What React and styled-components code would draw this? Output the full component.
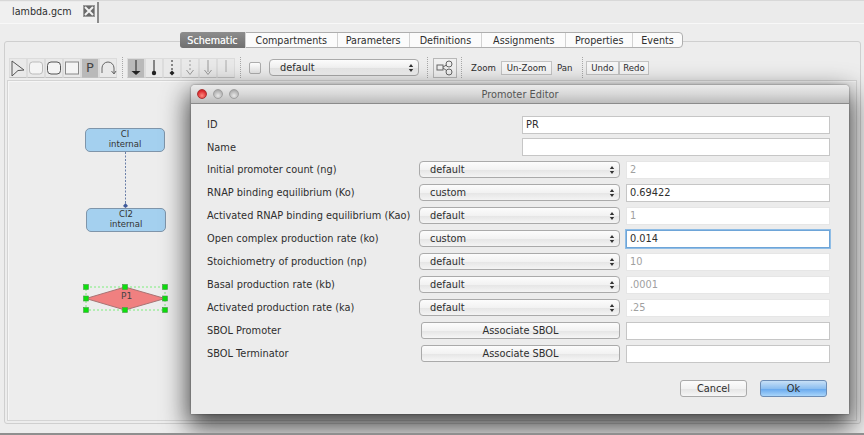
import React from "react";
import styled, { createGlobalStyle, css } from "styled-components";

const Global = createGlobalStyle`
  html, body { margin: 0; padding: 0; background: #ededed; overflow: hidden; }
  * { box-sizing: border-box; }
`;

const font = css`
  font-family: "DejaVu Sans", "Liberation Sans", sans-serif;
  font-size: 9.8px;
  color: #2e2e2e;
`;

const Frame = styled.div`
  ${font}
  position: relative;
  width: 864px;
  height: 435px;
  background: #ededed;
  display: flex;
  flex-direction: column;
  overflow: hidden;
  border-bottom: 2px solid #8f8f8f;
`;

const TabHeader = styled.div`
  height: 24px;
  flex: none;
  display: flex;
  align-items: stretch;
  padding-top: 2px;
  border-bottom: 1px solid #f8f8f8;
  box-shadow: 0 1px 0 #d8d8d8 inset;
  background: #ebebeb;
`;

const FileTab = styled.div`
  width: 99px;
  display: flex;
  align-items: center;
  gap: 11px;
  padding: 0 3px 3px 12px;
  font-size: 9.6px;
  background: #f0f0f0;
  border-right: 2px solid #8c8c8c;
`;

const CloseBox = styled.div`
  width: 12px;
  height: 12px;
  background: #6a6a6a;
  border: 1px solid #9a9a9a;
  display: flex;
`;

const Panel = styled.div`
  position: relative;
  flex: 1;
  margin: 17px 3px 9px 4px;
  border: 1px solid #cfcfcf;
  border-radius: 3px;
  display: flex;
  flex-direction: column;
`;

const TabStrip = styled.div`
  display: flex;
  height: 16px;
  margin: -10px 0 0 175px;
  width: 503px;
  background: #fbfbfb;
  border: 1px solid #aeaeae;
  border-radius: 4px;
`;

const Tab = styled.div`
  width: ${(p) => p.$w}px;
  display: flex;
  align-items: center;
  justify-content: center;
  font-size: 9.6px;
  border-right: ${(p) => (p.$last ? "none" : "1px solid #d2d2d2")};
  ${(p) =>
    p.$active &&
    css`
      color: #f4f4f4;
      text-shadow: 0 0 0.6px #f4f4f4;
      background: linear-gradient(#8d8d8d, #6f6f6f);
      border-radius: 3px 0 0 3px;
      margin: -1px 0 -1px -1px;
    `}
`;

const Toolbar = styled.div`
  display: flex;
  align-items: center;
  height: 21px;
  margin-top: 9px;
  padding-left: 4px;
  flex: none;
`;

const ToolGroup = styled.div`
  display: flex;
`;

const ToolButton = styled.div`
  width: 18px;
  height: 20px;
  border: 1px solid #dcdcdc;
  border-bottom-color: #c0c0c0;
  background: ${(p) => (p.$on ? "#b9b9b9" : "#e9e9e9")};
  display: flex;
  align-items: center;
  justify-content: center;
  font-size: 13px;
  color: #444;
`;

const Dots = styled.div`
  width: 1px;
  height: 21px;
  margin: ${(p) => p.$m || "0 4px 0 5px"};
  border-left: 1px dotted #a8a8a8;
`;

const CheckBox = styled.div`
  width: 12px;
  height: 12px;
  margin: 0 8px 0 4px;
  border: 1px solid #adadad;
  border-radius: 2px;
  background: linear-gradient(#fdfdfd, #e4e4e4);
`;

const SelectBox = styled.div`
  display: flex;
  align-items: center;
  justify-content: space-between;
  width: ${(p) => p.$w}px;
  height: 17px;
  padding: 0 4px 0 10px;
  border: 1px solid #aaaaaa;
  border-radius: 4px;
  background: linear-gradient(#fcfcfc, #f2f2f2 50%, #e6e6e6 55%, #f4f4f4);
  flex: none;
`;

const Stepper = styled.svg`
  width: 6px;
  height: 10px;
  flex: none;
`;

const GraphButton = styled.div`
  width: 24px;
  height: 20px;
  border: 1px solid #b8b8b8;
  background: #f0f0f0;
  display: flex;
  align-items: center;
  justify-content: center;
`;

const PlainLabel = styled.span`
  font-size: 8.6px;
  width: ${(p) => p.$w}px;
  margin: ${(p) => p.$m};
  white-space: nowrap;
`;

const BoxedButton = styled.div`
  width: ${(p) => p.$w}px;
  height: 14px;
  border: 1px solid #c4c4c4;
  background: #f6f6f6;
  font-size: 8.6px;
  display: flex;
  align-items: center;
  justify-content: center;
`;

const Canvas = styled.div`
  position: relative;
  flex: 1;
  margin: 2px 3px 2px 2px;
  border: 1px solid #d4d4d4;
  box-shadow: inset 1px 1px 0 #f6f6f6;
`;

const Species = styled.div`
  position: absolute;
  left: ${(p) => p.$x}px;
  top: ${(p) => p.$y}px;
  width: 80px;
  height: 24px;
  background: #a4d0ef;
  border: 1px solid #7f95aa;
  border-radius: 5px;
  font-size: 8.5px;
  line-height: 10px;
  text-align: center;
  color: #333;
`;

const Drawing = styled.svg`
  position: absolute;
  left: ${(p) => p.$x}px;
  top: ${(p) => p.$y}px;
  overflow: visible;
`;

const PromoterLabel = styled.span`
  position: absolute;
  left: 113px;
  top: 210px;
  font-size: 9px;
  color: #444;
`;

const Dialog = styled.div`
  position: absolute;
  left: 191px;
  top: 85px;
  width: 658px;
  height: 329px;
  background: #ececec;
  border-radius: 4px 4px 0 0;
  box-shadow: 0 10px 26px 3px rgba(0, 0, 0, 0.72), 0 0 2px rgba(0, 0, 0, 0.5);
  display: flex;
  flex-direction: column;
`;

const TitleBar = styled.div`
  position: relative;
  height: 19px;
  flex: none;
  display: flex;
  align-items: center;
  justify-content: center;
  background: linear-gradient(#ebebeb, #d8d8d8 50%, #bcbcbc);
  border-bottom: 1px solid #8b8b8b;
  border-radius: 4px 4px 0 0;
  color: #555;
`;

const Lights = styled.div`
  position: absolute;
  left: 6px;
  top: 4px;
  display: flex;
  gap: 6px;
`;

const Light = styled.div`
  width: 10px;
  height: 10px;
  border-radius: 50%;
  background: ${(p) =>
    p.$red
      ? "radial-gradient(circle at 50% 70%, #ff8a80, #d9252a 70%)"
      : "radial-gradient(circle at 50% 70%, #e8e8e8, #a9a9a9 80%)"};
  border: 1px solid ${(p) => (p.$red ? "#a33" : "#a0a0a0")};
`;

const Form = styled.div`
  padding: 9px 19px 0 16px;
  display: flex;
  flex-direction: column;
`;

const Row = styled.div`
  display: flex;
  align-items: center;
  height: ${(p) => (p.$tight ? 22 : 23)}px;
`;

const Label = styled.div`
  width: ${(p) => (p.$wide ? 315 : 212)}px;
  flex: none;
  white-space: nowrap;
`;

const Input = styled.div`
  flex: 1;
  height: 18px;
  margin-left: ${(p) => (p.$wide ? 0 : 6)}px;
  padding: 0 3px;
  display: flex;
  align-items: center;
  background: #fff;
  color: ${(p) => (p.$off ? "#a0a0a0" : "#2e2e2e")};
  border: 1px solid ${(p) => (p.$off ? "#e6e6e6" : "#c6c6c6")};
  ${(p) =>
    p.$focus &&
    css`
      border-color: #6ea5d8;
      box-shadow: 0 0 0 1px #8fbde6;
    `}
`;

const PushButton = styled.div`
  width: ${(p) => p.$w}px;
  height: 17px;
  margin-left: ${(p) => p.$ml || 0}px;
  border: 1px solid ${(p) => (p.$primary ? "#6d8db5" : "#aaaaaa")};
  border-radius: 3px;
  flex: none;
  background: ${(p) =>
    p.$primary
      ? "linear-gradient(#c7e0f7, #8dbff0 50%, #6aaaee 55%, #a9d5fa)"
      : "linear-gradient(#fcfcfc, #f2f2f2 50%, #e6e6e6 55%, #f6f6f6)"};
  display: flex;
  align-items: center;
  justify-content: center;
`;

const Footer = styled.div`
  display: flex;
  justify-content: flex-end;
  padding: 15px 22px 0 0;
`;

const StepIcon = () => (
  <Stepper viewBox="0 0 6 10">
    <path d="M3 1 L5.2 4 H0.8 Z M3 9 L0.8 6 H5.2 Z" fill="#333" />
  </Stepper>
);

const Sel = ({ children, w = 201 }) => (
  <SelectBox $w={w}>
    {children}
    <StepIcon />
  </SelectBox>
);

const Ic = styled.svg`
  width: 16px;
  height: 18px;
  overflow: visible;
`;

const shapes = (
  <>
    <ToolButton>
      <Ic viewBox="0 0 16 18">
        <path d="M2 2 L14 11 L8 11.5 L2 17 Z" fill="none" stroke="#555" />
      </Ic>
    </ToolButton>
    <ToolButton>
      <Ic viewBox="0 0 16 18">
        <rect x="1.5" y="3" width="13" height="12" rx="3" fill="#f4f4f4" stroke="#bbb" />
      </Ic>
    </ToolButton>
    <ToolButton>
      <Ic viewBox="0 0 16 18">
        <rect x="1.5" y="3" width="13" height="12" rx="3.5" fill="#f4f4f4" stroke="#555" />
      </Ic>
    </ToolButton>
    <ToolButton>
      <Ic viewBox="0 0 16 18">
        <rect x="1.5" y="3" width="13" height="12" fill="#f4f4f4" stroke="#888" />
      </Ic>
    </ToolButton>
    <ToolButton $on>P</ToolButton>
    <ToolButton>
      <Ic viewBox="0 0 16 18">
        <path d="M2 14 V9 A6 6 0 0 1 14 9 V14 M11.5 12 L14 15 L16 12" fill="none" stroke="#666" />
      </Ic>
    </ToolButton>
  </>
);

const Arrow = ({ dash, color = "#222", head, on }) => (
  <ToolButton $on={on}>
    <Ic viewBox="0 0 16 18">
      <path d="M8 1 V13" stroke={color} strokeDasharray={dash} fill="none" />
      {head === "solid" && <path d="M3.5 12 H12.5 L8 16 Z" fill={color} />}
      {head === "dot" && <circle cx="8" cy="14" r="2.2" fill={color} />}
      {head === "diamond" && <path d="M8 11.5 L10.5 14 L8 16.5 L5.5 14 Z" fill={color} />}
      {head === "open" && <path d="M4.5 11 L8 15.5 L11.5 11" fill="none" stroke={color} />}
    </Ic>
  </ToolButton>
);

const handles = [
  [0, 0], [39, 0], [79, 0],
  [0, 11.5], [79, 11.5],
  [0, 23], [39, 23], [79, 23],
];

const rows = [
  ["Initial promoter count (ng)", "default", "2"],
  ["RNAP binding equilibrium (Ko)", "custom", "0.69422"],
  ["Activated RNAP binding equilibrium (Kao)", "default", "1"],
  ["Open complex production rate (ko)", "custom", "0.014", true],
  ["Stoichiometry of production (np)", "default", "10"],
  ["Basal production rate (kb)", "default", ".0001"],
  ["Activated production rate (ka)", "default", ".25"],
];

export default function App() {
  return (
    <Frame>
      <Global />
      <TabHeader>
        <FileTab>
          lambda.gcm
          <CloseBox>
            <svg viewBox="0 0 10 10" width="10" height="10">
              <path d="M1 1 L9 9 M9 1 L1 9" stroke="#f2f2f2" strokeWidth="2" />
            </svg>
          </CloseBox>
        </FileTab>
      </TabHeader>
      <Panel>
        <TabStrip>
          <Tab $w={66} $active>Schematic</Tab>
          <Tab $w={92}>Compartments</Tab>
          <Tab $w={72}>Parameters</Tab>
          <Tab $w={73}>Definitions</Tab>
          <Tab $w={84}>Assignments</Tab>
          <Tab $w={67}>Properties</Tab>
          <Tab $w={49} $last>Events</Tab>
        </TabStrip>
        <Toolbar>
          <ToolGroup>{shapes}</ToolGroup>
          <Dots />
          <ToolGroup>
            <Arrow on head="solid" />
            <Arrow head="dot" />
            <Arrow head="diamond" dash="2 2" />
            <Arrow head="open" dash="2 2" color="#999" />
            <Arrow head="open" color="#999" />
            <Arrow color="#aaa" />
          </ToolGroup>
          <Dots />
          <CheckBox />
          <Sel w={150}>default</Sel>
          <Dots $m="0 5px 0 8px" />
          <GraphButton>
            <svg viewBox="0 0 18 16" width="18" height="16">
              <rect x="1" y="5" width="6" height="5" fill="none" stroke="#666" />
              <circle cx="13" cy="4" r="3" fill="none" stroke="#666" />
              <circle cx="13" cy="12" r="3" fill="none" stroke="#666" />
              <path d="M7 7 L10.5 5 M7 8 L10.5 10.5" stroke="#666" />
            </svg>
          </GraphButton>
          <Dots $m="0 9px 0 4px" />
          <PlainLabel $w={25} $m="0 5px 0 0">Zoom</PlainLabel>
          <BoxedButton $w={51}>Un-Zoom</BoxedButton>
          <PlainLabel $w={15} $m="0 10px 0 5px">Pan</PlainLabel>
          <Dots $m="0 3px 0 0" />
          <BoxedButton $w={33}>Undo</BoxedButton>
          <BoxedButton $w={30}>Redo</BoxedButton>
        </Toolbar>
        <Canvas>
          <Species $x={77} $y={47}>CI<br />internal</Species>
          <Species $x={78} $y={127}>CI2<br />internal</Species>
          <Drawing $x={116} $y={71} width="4" height="56">
            <path d="M1.5 0 V54" stroke="#6a7fa8" strokeDasharray="2 1.5" fill="none" />
            <path d="M1.5 51 L4 54 L1.5 56 L-1 54 Z" fill="#3f5a9a" />
          </Drawing>
          <Drawing $x={78} $y={206} width="80" height="24">
            <path d="M0 0 H79 V23 H0 Z" fill="none" stroke="#7dee7d" strokeDasharray="2 2" />
            <path d="M0 11.5 L39 0 L79 11.5 L39 23 Z" fill="#f08080" stroke="#a87474" />
            {handles.map(([x, y]) => (
              <rect key={`${x}-${y}`} x={x - 2.5} y={y - 2.5} width="5" height="5" fill="#0de00d" stroke="#4a9a4a" strokeWidth="0.6" />
            ))}
          </Drawing>
          <PromoterLabel>P1</PromoterLabel>
        </Canvas>
      </Panel>
      <Dialog>
        <TitleBar>
          <Lights>
            <Light $red />
            <Light />
            <Light />
          </Lights>
          Promoter Editor
        </TitleBar>
        <Form>
          <Row>
            <Label $wide>ID</Label>
            <Input $wide>PR</Input>
          </Row>
          <Row $tight>
            <Label $wide>Name</Label>
            <Input $wide />
          </Row>
          {rows.map(([label, mode, value, focus]) => (
            <Row key={label}>
              <Label>{label}</Label>
              <Sel>{mode}</Sel>
              <Input $off={mode === "default"} $focus={focus}>{value}</Input>
            </Row>
          ))}
          <Row>
            <Label>SBOL Promoter</Label>
            <PushButton $w={199} $ml={2}>Associate SBOL</PushButton>
            <Input />
          </Row>
          <Row>
            <Label>SBOL Terminator</Label>
            <PushButton $w={199} $ml={2}>Associate SBOL</PushButton>
            <Input />
          </Row>
        </Form>
        <Footer>
          <PushButton $w={67}>Cancel</PushButton>
          <PushButton $w={67} $ml={13} $primary>Ok</PushButton>
        </Footer>
      </Dialog>
    </Frame>
  );
}
